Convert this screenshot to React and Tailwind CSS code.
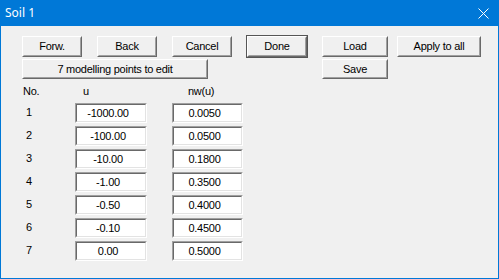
import React from 'react';

const rows = [
    ['1', '-1000.00', '0.0050'],
    ['2', '-100.00', '0.0500'],
    ['3', '-10.00', '0.1800'],
    ['4', '-1.00', '0.3500'],
    ['5', '-0.50', '0.4000'],
    ['6', '-0.10', '0.4500'],
    ['7', '0.00', '0.5000'],
];

// classic raised button
function Btn({ label, w = 'w-[60px]', h = 'h-[21px]', def = false, className = '' }) {
    return (
        <div
            className={`${w} ${h} ${className} shrink-0 border border-t-white border-l-white border-b-[#696969] border-r-[#696969] ${def ? 'ring-1 ring-[#555555]' : ''}`}
        >
            <div className="w-full h-full border border-t-[#f0f0f0] border-l-[#f0f0f0] border-b-[#a0a0a0] border-r-[#a0a0a0] bg-[#f0f0f0] flex items-center justify-center">
                {label}
            </div>
        </div>
    );
}

// sunken edit field
function Field({ value, w }) {
    return (
        <div className={`${w} h-[20px] shrink-0 border border-t-[#a0a0a0] border-l-[#a0a0a0] border-b-white border-r-white`}>
            <div className="w-full h-full border border-t-[#696969] border-l-[#696969] border-b-[#e3e3e3] border-r-[#e3e3e3] bg-white flex items-center justify-center pr-[6px]">
                {value}
            </div>
        </div>
    );
}

export default function App() {
    return (
        <div className="w-[499px] h-[279px] bg-[#0078d7] flex flex-col px-px pb-px">
            {/* Title bar */}
            <div className="h-[26px] shrink-0 flex items-center justify-between pl-[4px] pr-[9px] text-white text-[12px] font-['Noto_Sans',sans-serif]">
                <span>Soil 1</span>
                <svg width="11" height="11" viewBox="0 0 11 11" className="mt-[1px]">
                    <path d="M0.5 0.5 L10.5 10.5 M10.5 0.5 L0.5 10.5" stroke="white" strokeWidth="1" fill="none" />
                </svg>
            </div>

            {/* Body */}
            <div className="flex-1 bg-[#f0f0f0] pl-[21px] pt-[10px] text-black text-[11px] tracking-[-0.25px] leading-[13px] font-['Liberation_Sans',Arial,sans-serif]">
                {/* Buttons */}
                <div className="flex">
                    <Btn label="Forw." />
                    <Btn label="Back" className="ml-[15px]" />
                    <Btn label="Cancel" className="ml-[15px]" />
                    <Btn label="Done" className="ml-[15px]" def />
                    <Btn label="Load" w="w-[66px]" className="ml-[15px]" />
                    <Btn label="Apply to all" w="w-[84px]" className="ml-[9px]" />
                </div>
                <div className="flex mt-[2px]">
                    <Btn label="7 modelling points to edit" w="w-[186px]" h="h-[20px]" />
                    <Btn label="Save" w="w-[66px]" h="h-[20px]" className="ml-[114px]" />
                </div>

                {/* Table header */}
                <div className="flex mt-[6px] h-[13px]">
                    <div className="w-[53px] pl-[1px]">No.</div>
                    <div className="w-[97px] pl-[8px]">u</div>
                    <div className="pl-[16px]">nw(u)</div>
                </div>

                {/* Rows */}
                <div className="flex flex-col gap-[3px] mt-[5px]">
                    {rows.map(([n, u, nw]) => (
                        <div key={n} className="flex items-center">
                            <div className="w-[53px] pl-[4px] -mt-[2px]">{n}</div>
                            <Field value={u} w="w-[72px]" />
                            <div className="w-[25px]" />
                            <Field value={nw} w="w-[71px]" />
                        </div>
                    ))}
                </div>
            </div>
        </div>
    );
}
